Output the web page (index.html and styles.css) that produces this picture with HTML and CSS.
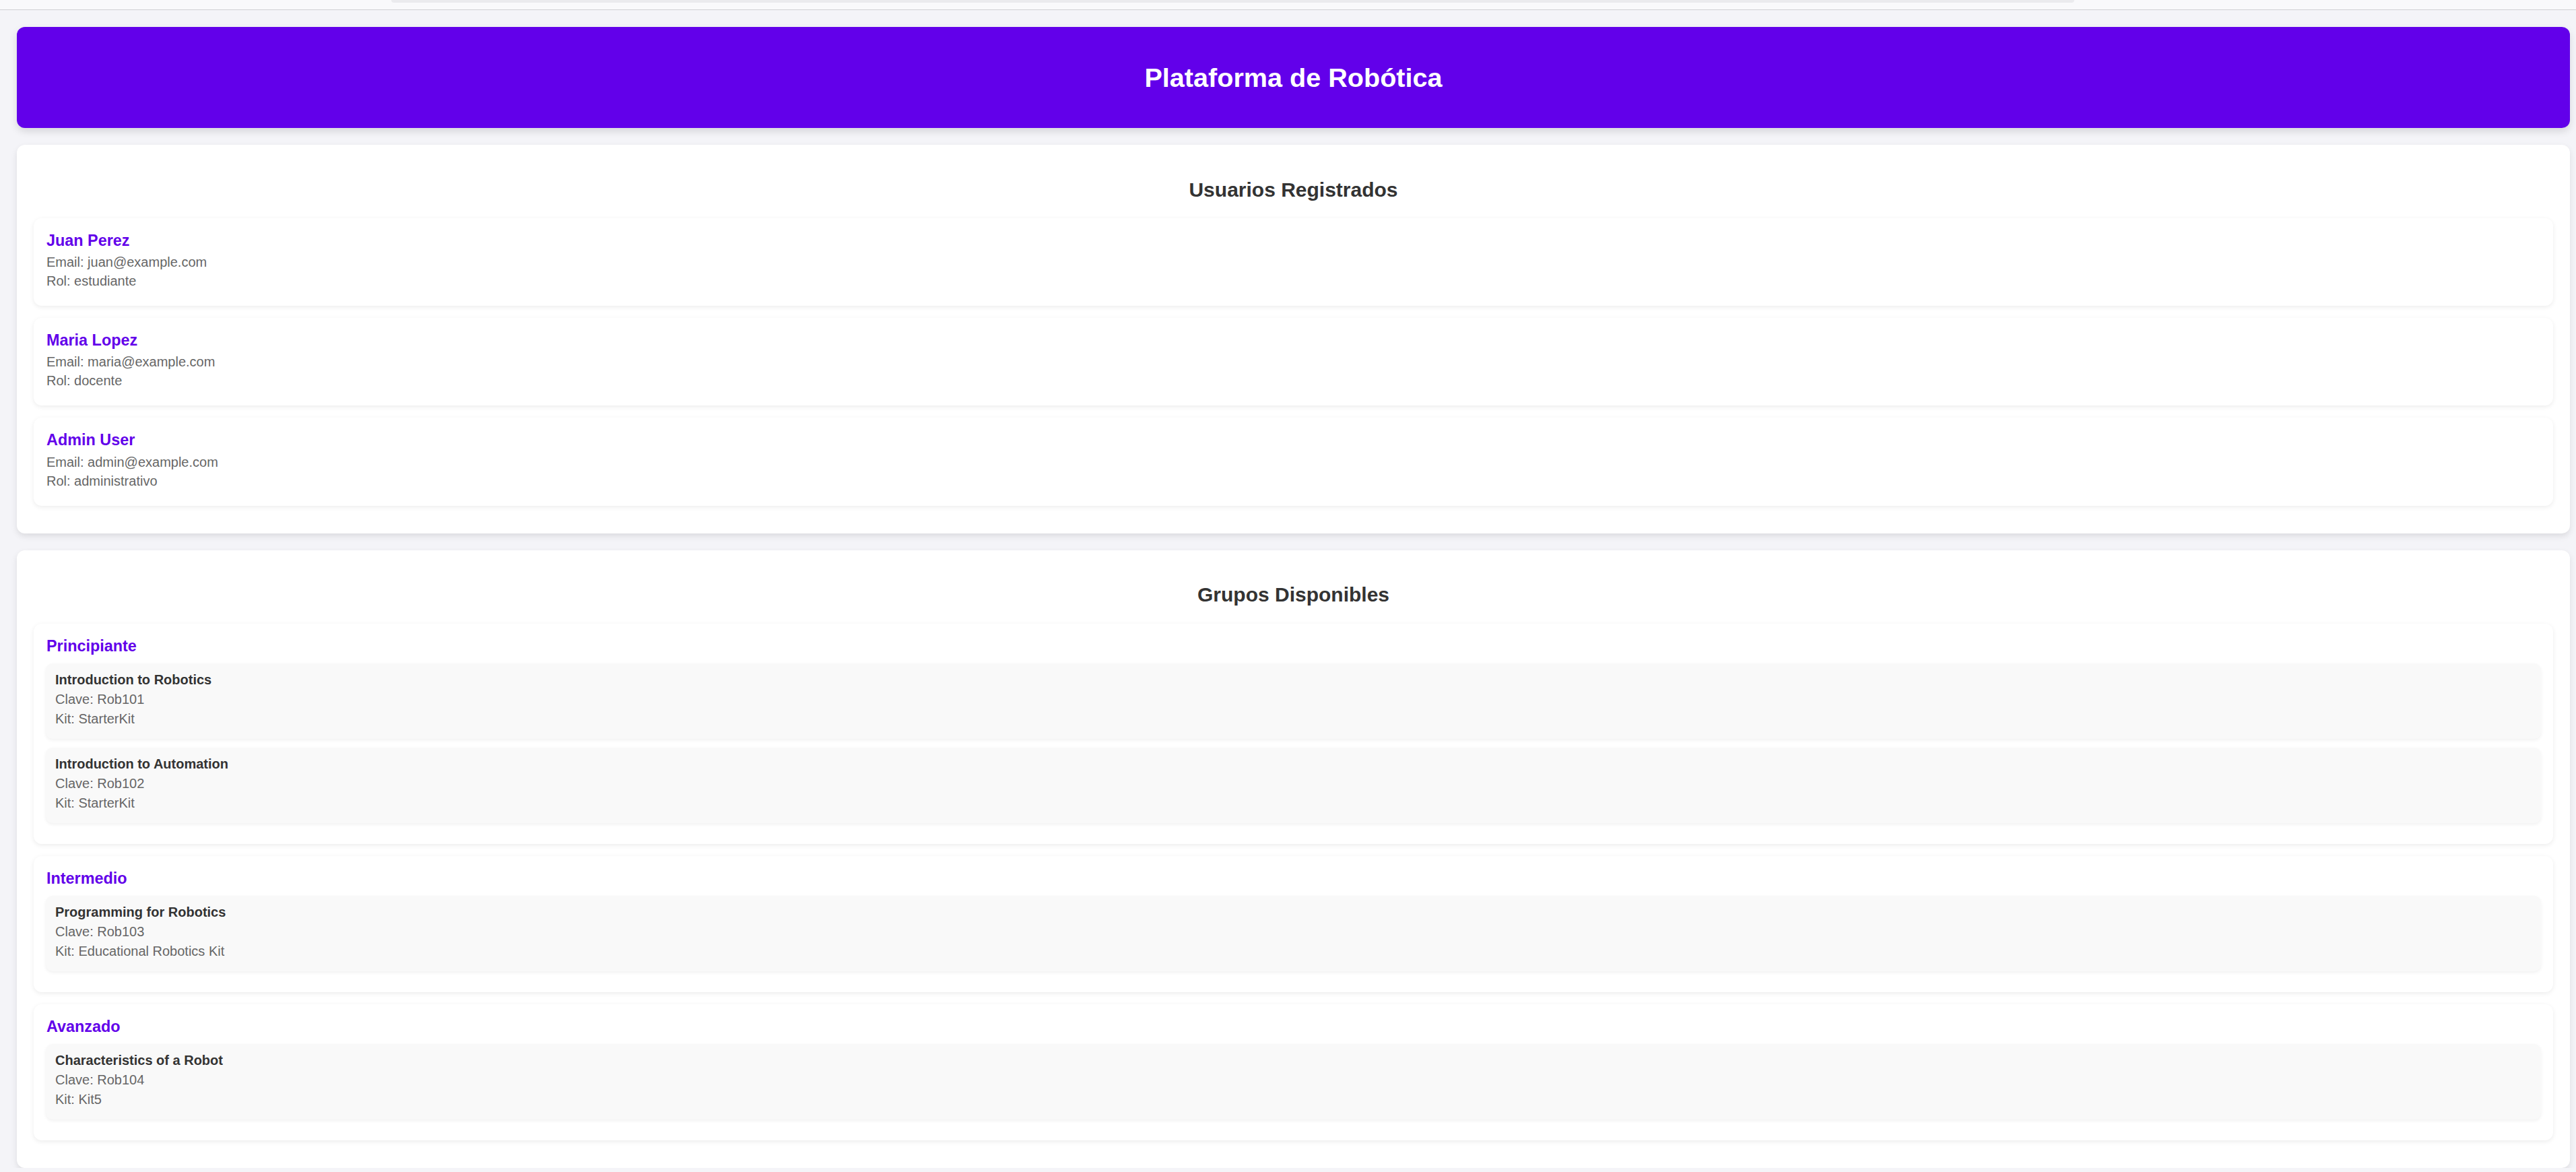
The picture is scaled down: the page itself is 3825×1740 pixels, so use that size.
FILE: index.html
```html
<!DOCTYPE html>
<html lang="es">
<head>
<meta charset="utf-8">
<title>Plataforma de Robótica</title>
<link rel="stylesheet" href="styles.css">
</head>
<body>
<div class="topbar"><div class="tab"></div></div>
<main class="page">
  <header class="header">
    <h1>Plataforma de Robótica</h1>
  </header>

  <section class="card">
    <h2>Usuarios Registrados</h2>
    <div class="user">
      <h3>Juan Perez</h3>
      <p>Email: juan@example.com</p>
      <p>Rol: estudiante</p>
    </div>
    <div class="user">
      <h3>Maria Lopez</h3>
      <p>Email: maria@example.com</p>
      <p>Rol: docente</p>
    </div>
    <div class="user">
      <h3>Admin User</h3>
      <p>Email: admin@example.com</p>
      <p>Rol: administrativo</p>
    </div>
  </section>

  <section class="card">
    <h2>Grupos Disponibles</h2>
    <div class="group">
      <h3>Principiante</h3>
      <div class="course">
        <h4>Introduction to Robotics</h4>
        <p>Clave: Rob101</p>
        <p>Kit: StarterKit</p>
      </div>
      <div class="course">
        <h4>Introduction to Automation</h4>
        <p>Clave: Rob102</p>
        <p>Kit: StarterKit</p>
      </div>
    </div>
    <div class="group">
      <h3>Intermedio</h3>
      <div class="course">
        <h4>Programming for Robotics</h4>
        <p>Clave: Rob103</p>
        <p>Kit: Educational Robotics Kit</p>
      </div>
    </div>
    <div class="group">
      <h3>Avanzado</h3>
      <div class="course">
        <h4>Characteristics of a Robot</h4>
        <p>Clave: Rob104</p>
        <p>Kit: Kit5</p>
      </div>
    </div>
  </section>
</main>
</body>
</html>
```

FILE: styles.css
```css
* { box-sizing: border-box; }

html, body {
  margin: 0;
  padding: 0;
}

body {
  background: #f4f4f8;
  font-family: "Liberation Sans", Arial, sans-serif;
  color: #333;
}

.topbar {
  height: 15px;
  background: #f9f9fb;
  border-bottom: 1px solid #cfcfd4;
}

.topbar .tab {
  margin-left: 581px;
  width: 2499px;
  height: 4px;
  background: #ebebee;
  border-radius: 0 0 6px 6px;
}

.page {
  padding: 25px 9px 0 25px;
  display: flex;
  flex-direction: column;
  gap: 25px;
}

.header {
  height: 150px;
  background: #6200ea;
  border-radius: 12px;
  box-shadow: 0 5px 12px rgba(0, 0, 0, 0.12);
  display: flex;
  align-items: center;
  justify-content: center;
}

.header h1 {
  margin: 0;
  color: #fff;
  font-size: 39.6px;
  font-weight: bold;
}

.card {
  background: #fff;
  border-radius: 12px;
  padding: 24px 25px 23px 25px;
  box-shadow: 0 4px 10px rgba(0, 0, 0, 0.1);
}

.card h2 {
  margin: 25.5px 0 25.5px;
  text-align: center;
  font-size: 30px;
  font-weight: bold;
  color: #333;
}

.user {
  background: #fff;
  border-radius: 12px;
  padding: 19.5px 19px 23px;
  margin-bottom: 18px;
  box-shadow: 0 2px 7px rgba(0, 0, 0, 0.08);
}

.user h3 {
  margin: 0 0 4.7px;
  font-size: 23.4px;
  font-weight: bold;
  color: #6200ea;
}

.user p {
  margin: 0;
  font-size: 20px;
  line-height: 28px;
  color: #666;
}

.group {
  background: #fff;
  border-radius: 12px;
  padding: 20.5px 18px 17.5px 19px;
  margin-bottom: 18px;
  box-shadow: 0 2px 7px rgba(0, 0, 0, 0.08);
}

.group h3 {
  margin: 0 0 12px;
  font-size: 23.4px;
  font-weight: bold;
  color: #6200ea;
}

.course {
  background: #f9f9f9;
  border-radius: 10px;
  padding: 12.6px 14px 15.4px;
  margin: 0 0 13px -1px;
  box-shadow: 0 2px 5px rgba(0, 0, 0, 0.06);
}

.course h4 {
  margin: 0 0 3px;
  font-size: 20px;
  font-weight: bold;
  color: #333;
}

.course p {
  margin: 0;
  font-size: 20px;
  line-height: 29px;
  color: #666;
}
```
